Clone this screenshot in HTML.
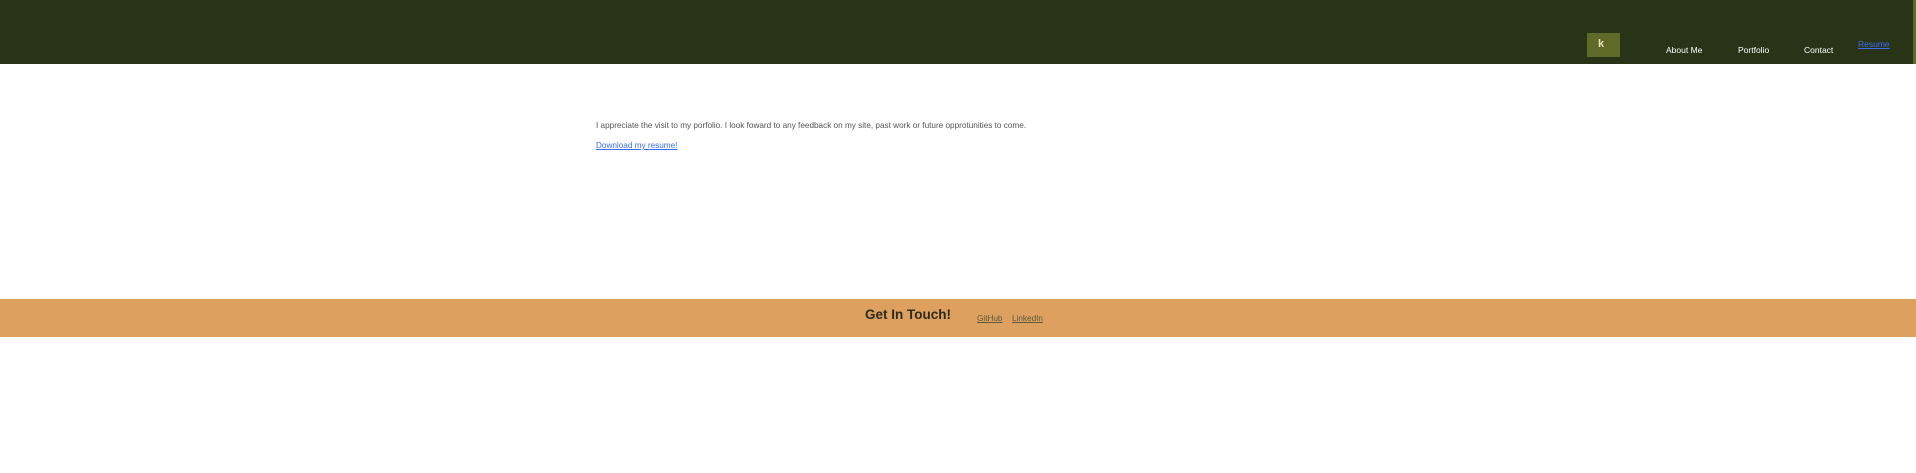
<!DOCTYPE html>
<html><head><style>
html,body{margin:0;padding:0;width:1916px;height:473px;background:#fff;overflow:hidden;font-family:"Liberation Sans",sans-serif}
.hdr{position:absolute;left:0;top:0;width:1916px;height:64px;background:#283318}
.edge{position:absolute;left:1913px;top:0;width:3px;height:64px;background:#5b6b2a}
.logo{position:absolute;left:1587px;top:33px;width:33px;height:24px;background:#5f6a28}
.logo span{position:absolute;left:11px;top:5px;color:#e8e2b8;font-size:11px;font-weight:bold}
.nav{position:absolute;top:45px;color:#fff;font-size:8.5px}
.res{position:absolute;left:1858px;top:39px;color:#3b6cf0;font-size:8.5px;text-decoration:underline}
.p{position:absolute;left:596px;top:121px;color:#555;font-size:8.2px;white-space:nowrap}
.dl{position:absolute;left:596px;top:141px;color:#3b6cf0;font-size:8.2px;text-decoration:underline}
.ftr{position:absolute;left:0;top:299px;width:1916px;height:38px;background:#dda05e}
.gt{position:absolute;left:865px;top:307px;font-size:13.5px;font-weight:bold;color:#2b2b1e}
.fl{position:absolute;top:314px;font-size:8.2px;color:#5a5a3a;text-decoration:underline}
</style></head><body>
<div class="hdr"></div><div class="edge"></div>
<div class="logo"><span>k</span></div>
<div class="nav" style="left:1666px">About Me</div>
<div class="nav" style="left:1738px">Portfolio</div>
<div class="nav" style="left:1804px">Contact</div>
<div class="res">Resume</div>
<div class="p">I appreciate the visit to my porfolio. I look foward to any feedback on my site, past work or future opprotunities to come.</div>
<div class="dl">Download my resume!</div>
<div class="ftr"></div>
<div class="gt">Get In Touch!</div>
<div class="fl" style="left:977px">GitHub</div>
<div class="fl" style="left:1012px">LinkedIn</div>
</body></html>
